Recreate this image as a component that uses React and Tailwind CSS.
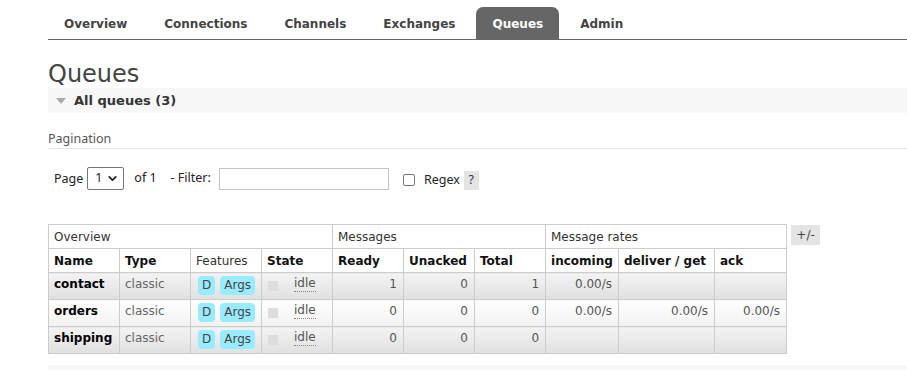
import React from "react";
import { ChevronDown } from "lucide-react";

const tabs = ["Overview", "Connections", "Channels", "Exchanges", "Queues", "Admin"];

const queues = [
	{ name: "contact", ready: 1, unacked: 0, total: 1, incoming: "0.00/s", deliver: "", ack: "" },
	{ name: "orders", ready: 0, unacked: 0, total: 0, incoming: "0.00/s", deliver: "0.00/s", ack: "0.00/s" },
	{ name: "shipping", ready: 0, unacked: 0, total: 0, incoming: "", deliver: "", ack: "" },
];

const Nav = () => {
	return (
		<div className="ml-12 pt-[7px] border-b border-[#666]">
			<ul className="flex gap-[5px]">
				{tabs.map((t) => (
					<li
						key={t}
						className={
							t === "Queues"
								? "h-8 px-4 pt-px flex items-center font-bold text-white bg-[#666] rounded-t-[7px]"
								: "h-8 px-4 pt-px flex items-center font-bold text-[#444]"
						}
					>
						{t}
					</li>
				))}
			</ul>
		</div>
	);
};

const Pagination = () => {
	return (
		<div className="mt-[17px]">
			<p className="font-['Noto_Sans',sans-serif] text-[12.5px] leading-[17px] text-[#555] pb-[1px] border-b border-[#e3e3e3]">
				Pagination
			</p>
			{/* page / filter row */}
			<div className="flex items-center h-[23px] mt-[18px] pl-[6px] font-['Noto_Sans',sans-serif] text-[12.5px] text-[#222]">
				<span className="mt-[2px]">Page</span>
				<div className="ml-[4px] w-[37px] h-[23px] border border-[#767676] rounded-[2px] flex items-center justify-between pl-[7px] pr-[4px] bg-white">
					<span>1</span>
					<ChevronDown size={13} strokeWidth={3.2} className="text-[#222]" />
				</div>
				<span className="ml-[10px]">of 1</span>
				<span className="ml-[14px]">- Filter:</span>
				<div className="ml-[8px] w-[170px] h-[22px] border border-[#c4c4c4] bg-white"></div>
				<div className="ml-[14px] mt-[3px] w-[12px] h-[12px] border border-[#767676] rounded-[2px] bg-white"></div>
				<span className="ml-[9px] mt-[4px]">Regex</span>
				<span className="ml-[4px] mt-[4px] w-[15px] h-[19px] bg-[#e4e4e4] text-[#442a55] flex items-center justify-center">?</span>
			</div>
		</div>
	);
};

const Badge = ({ children }) => (
	<span className="inline-block px-[4px] h-[19px] leading-[19px] rounded-[4px] bg-[#99ebff] text-[#444]">
		{children}
	</span>
);

const QueueTable = () => {
	const th = "border border-[#ccc] px-[5px] text-left align-middle";
	return (
		<div className="flex items-start mt-[34px]">
			<table className="table-fixed border-collapse w-[739px] text-[12px]">
				<colgroup>
					<col className="w-[71px]" />
					<col className="w-[71px]" />
					<col className="w-[71px]" />
					<col className="w-[71px]" />
					<col className="w-[71px]" />
					<col className="w-[71px]" />
					<col className="w-[71px]" />
					<col className="w-[73px]" />
					<col className="w-[96px]" />
					<col className="w-[72px]" />
				</colgroup>
				<thead>
					<tr className="h-[24px] text-[#333]">
						<th colSpan={4} className={th + " font-normal"}>Overview</th>
						<th colSpan={3} className={th + " font-normal"}>Messages</th>
						<th colSpan={3} className={th + " font-normal"}>Message rates</th>
					</tr>
					<tr className="h-[24px] text-[#111]">
						<th className={th}>Name</th>
						<th className={th}>Type</th>
						<th className={th + " font-normal text-[#333]"}>Features</th>
						<th className={th}>State</th>
						<th className={th}>Ready</th>
						<th className={th}>Unacked</th>
						<th className={th}>Total</th>
						<th className={th}>incoming</th>
						<th className={th + " whitespace-nowrap px-[4px]"}>deliver / get</th>
						<th className={th}>ack</th>
					</tr>
				</thead>
				<tbody>
					{queues.map((q, i) => {
						const bg =
							i % 2 === 0
								? " bg-linear-to-b from-[#f3f3f3] to-[#e0e0e0]"
								: " bg-linear-to-b from-white to-[#f1f1f1]";
						const td = "border border-[#ccc] px-[5px] pt-[3px] align-top h-[27px] leading-[16px]" + bg;
						const num = td + " text-right text-[#555] pr-[6px]";
						return (
							<tr key={q.name}>
								<td className={td + " font-bold text-black"}>{q.name}</td>
								<td className={td + " text-[#666]"}>classic</td>
								<td className={td + " pt-[1px] pl-[7px]"}>
									<div className="flex gap-[5px]">
										<Badge>D</Badge>
										<Badge>Args</Badge>
									</div>
								</td>
								<td className={td}>
									<div className="flex items-center">
										<span className="w-[10px] h-[10px] bg-[#ddd] ml-px mt-[3px]"></span>
										<span className="ml-[16px] text-[#555] border-b border-dotted border-[#888] leading-[15px]">
											idle
										</span>
									</div>
								</td>
								<td className={num}>{q.ready}</td>
								<td className={num}>{q.unacked}</td>
								<td className={num}>{q.total}</td>
								<td className={num}>{q.incoming}</td>
								<td className={num}>{q.deliver}</td>
								<td className={num}>{q.ack}</td>
							</tr>
						);
					})}
				</tbody>
			</table>
			<button className="ml-[4px] mt-px w-[29px] h-[20px] bg-[#e4e4e4] text-[#444] text-[12px] flex items-center justify-center">
				+/-
			</button>
		</div>
	);
};

export default function App() {
	return (
		<div className="w-[907px] h-[370px] overflow-hidden bg-white font-['DejaVu_Sans',Verdana,sans-serif] text-[12px] text-[#444]">
			<Nav />

			<div className="ml-12">
				<h1 className="mt-[21px] text-[24px] leading-[26px] text-[#444] font-normal">Queues</h1>

				{/* All queues section */}
				<div className="mt-px h-[25px] bg-[#f7f7f7] flex items-center">
					<span className="ml-[8px] w-0 h-0 border-l-[5px] border-r-[5px] border-t-[6px] border-l-transparent border-r-transparent border-t-[#aaa]"></span>
					<span className="ml-[8px] font-bold text-[13px] text-[#333]">All queues (3)</span>
				</div>

				<Pagination />

				<QueueTable />

				<div className="mt-[11px] h-[10px] bg-[#f7f7f7]"></div>
			</div>
		</div>
	);
}
